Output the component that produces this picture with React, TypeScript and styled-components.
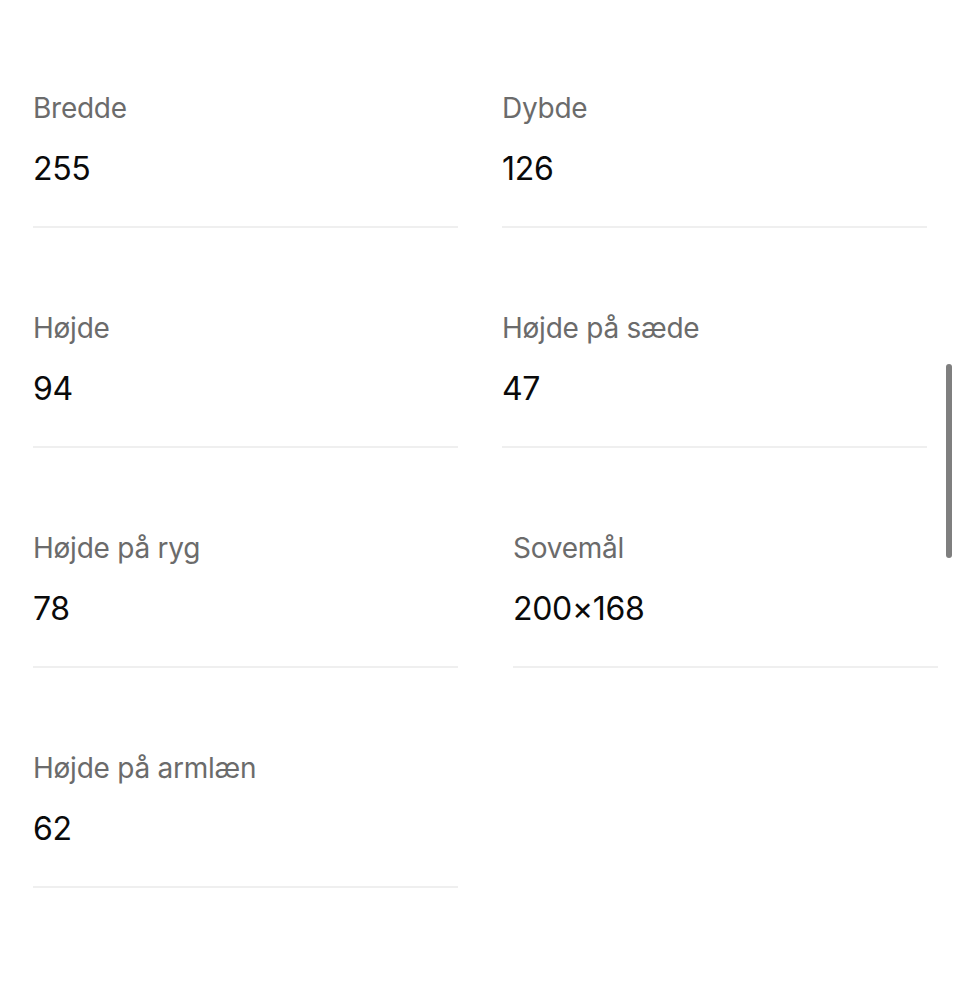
import React from 'react';
import styled, { createGlobalStyle } from 'styled-components';

const GlobalStyle = createGlobalStyle`
  html, body {
    margin: 0;
    padding: 0;
    background: #ffffff;
  }
  body {
    font-family: Inter, "Noto Sans", "Liberation Sans", sans-serif;
    -webkit-font-smoothing: antialiased;
  }
`;

const Page = styled.div`
  position: relative;
  width: 960px;
  height: 988px;
  overflow: hidden;
  background: #fff;
`;

const Grid = styled.div`
  display: grid;
  grid-template-columns: 425px 425px;
  column-gap: 44px;
  row-gap: 83px;
  padding: 91px 33px 0;
`;

const Item = styled.div<{ $shift?: number }>`
  display: flex;
  flex-direction: column;
  gap: 24px;
  padding-bottom: 37px;
  border-bottom: 2px solid #efefef;
  margin-left: ${(p) => p.$shift || 0}px;
  margin-right: ${(p) => -(p.$shift || 0)}px;
`;

const Label = styled.div`
  font-size: 28px;
  line-height: 34px;
  color: #6b6b6b;
  letter-spacing: -0.25px;
`;

const Value = styled.div`
  font-size: 32px;
  line-height: 40px;
  color: #0a0a0a;
  letter-spacing: -0.3px;
`;

const Scrollbar = styled.div`
  position: absolute;
  top: 364px;
  right: 8px;
  width: 6px;
  height: 194px;
  border-radius: 3px;
  background: #7f7f7f;
`;

const specs = [
  { label: 'Bredde', value: '255' },
  { label: 'Dybde', value: '126' },
  { label: 'Højde', value: '94' },
  { label: 'Højde på sæde', value: '47' },
  { label: 'Højde på ryg', value: '78' },
  { label: 'Sovemål', value: '200×168', shift: 11 },
  { label: 'Højde på armlæn', value: '62' },
];

export default function App() {
  return (
    <Page>
      <GlobalStyle />
      <Grid>
        {specs.map((s) => (
          <Item key={s.label} $shift={s.shift}>
            <Label>{s.label}</Label>
            <Value>{s.value}</Value>
          </Item>
        ))}
      </Grid>
      <Scrollbar />
    </Page>
  );
}
